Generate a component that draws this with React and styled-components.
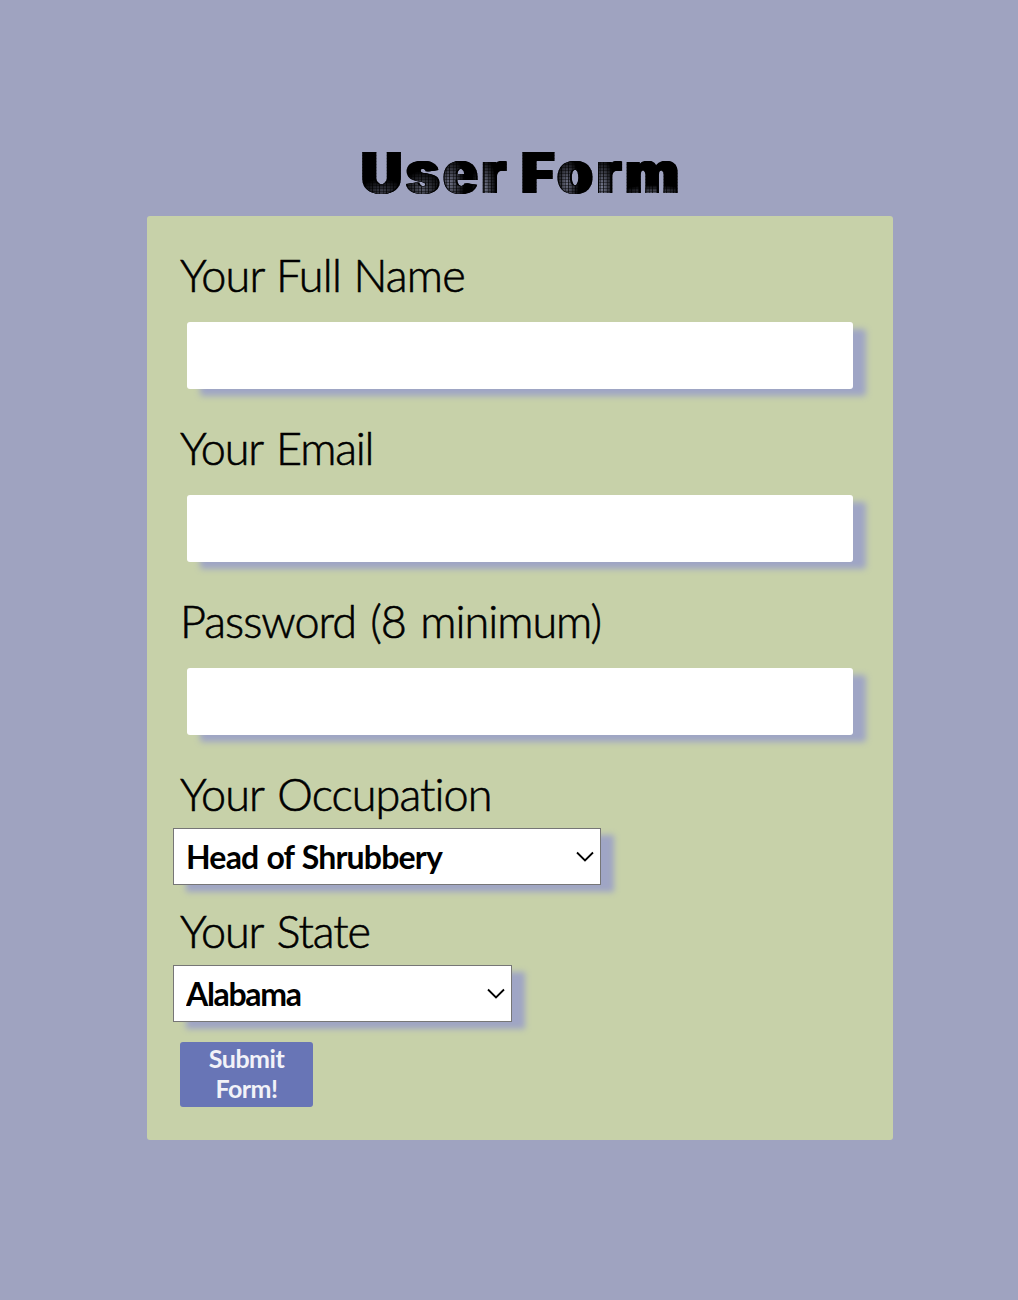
import React from "react";
import styled, { createGlobalStyle } from "styled-components";

const GlobalStyle = createGlobalStyle`
  * { box-sizing: border-box; }
  body { margin: 0; background: #9fa3c0; font-family: "Gill Sans", Lato, sans-serif; color: #000; }
`;

const Page = styled.main`
  min-height: 1300px;
  padding: 137px 125px 160px 147px;
`;

const Title = styled.h1`
  margin: 0 auto 9px;
  width: 325px;
  height: 70px;
  line-height: 71px;
  padding-left: 3px;
  white-space: nowrap;
  font-family: Inter, sans-serif;
  font-weight: 900;
  font-size: 57px;
  letter-spacing: 3.8px;
  word-spacing: -4px;
  color: transparent;
  /* worn ink: fine scratches fading in over the lower part of some letters */
  background:
    repeating-linear-gradient(90deg, #000a 0 1px, transparent 1px 4px, #0006 4px 5px, transparent 5px 7px),
    repeating-linear-gradient(0deg, #0006 0 1px, transparent 1px 3px),
    radial-gradient(ellipse 22px 12px at 24px 54px, #3c3e4a, transparent),
    radial-gradient(ellipse 20px 18px at 64px 52px, #565968, transparent),
    radial-gradient(ellipse 15px 26px at 92px 46px, #6d7084, transparent),
    radial-gradient(ellipse 12px 30px at 126px 50px, #777b90, transparent),
    radial-gradient(ellipse 12px 26px at 209px 46px, #6d7084, transparent),
    radial-gradient(ellipse 12px 30px at 244px 50px, #777b90, transparent),
    radial-gradient(ellipse 34px 8px at 296px 56px, #565968, transparent),
    #000;
  background-clip: text;
  -webkit-background-clip: text;
  filter: drop-shadow(2px 0 0 #000) drop-shadow(-1px 0 0 #000);
`;

const Form = styled.form`
  width: 746px;
  height: 924px;
  padding: 31px 33px 33px;
  display: flex;
  flex-direction: column;
  align-items: flex-start;
  background: #c7d1a9;
  border-radius: 3px;
`;

const Field = styled.div`
  display: flex;
  flex-direction: column;
  gap: ${(p) => (p.$select ? 8 : 21)}px;
  margin-bottom: ${(p) => p.$after}px;
`;

const Label = styled.label`
  height: 54px;
  line-height: 56px;
  font-size: 45px;
  font-weight: 300;
  white-space: nowrap;
  -webkit-text-stroke: 0.6px #000;
  letter-spacing: ${(p) => p.$track || 0}px;
  word-spacing: ${(p) => p.$space || 0}px;
`;

const Input = styled.input`
  width: 666px;
  height: 67px;
  margin-left: 7px;
  padding: 0 14px;
  border: 0;
  border-radius: 3px;
  background: #fff;
  box-shadow: 13px 7px 6px #9fa5c5;
  font: 32px Lato, sans-serif;
`;

const SelectBox = styled.div`
  display: grid;
  align-items: center;
  width: ${(p) => p.$width}px;
  height: 57px;
  margin-left: -7px;
  background: #fff;
  border: 1px solid #767676;
  box-shadow: 13px 7px 6px #9fa5c5;

  > * { grid-area: 1 / 1; }
  > svg { justify-self: end; margin-right: 6px; pointer-events: none; }
`;

const Select = styled.select`
  appearance: none;
  width: 100%;
  height: 55px;
  padding: 0 30px 0 12px;
  border: 0;
  background: transparent;
  color: #000;
  font: 700 32px Lato, sans-serif;
  letter-spacing: ${(p) => p.$track || 0}px;
  word-spacing: ${(p) => p.$space || 0}px;
`;

const Submit = styled.button`
  width: 133px;
  height: 65px;
  padding: 0 20px 4px;
  border: 0;
  border-radius: 3px;
  background: #6875b6;
  color: #f2f2f8;
  font: 700 25px/30px Lato, sans-serif;
  letter-spacing: -0.5px;
`;

const Chevron = () => (
  <svg width="18" height="12" viewBox="0 0 18 12" fill="none" stroke="#000" strokeWidth="1.8">
    <path d="M1 1.5 L9 9.5 L17 1.5" />
  </svg>
);

const textFields = [
  { id: "name", label: "Your Full Name", type: "text", track: -0.8, space: 1 },
  { id: "email", label: "Your Email", type: "email", track: -1.2, space: 3 },
  { id: "password", label: "Password (8 minimum)", type: "password", track: -1, space: 3 },
];

const selectFields = [
  { id: "job", label: "Your Occupation", value: "Head of Shrubbery", width: 428, after: 18, track: -0.95, space: 3, vTrack: -0.8, vSpace: 1 },
  { id: "state", label: "Your State", value: "Alabama", width: 339, after: 20, track: -1.1, space: 3, vTrack: -1.3 },
];

export default function App() {
  return (
    <Page>
      <GlobalStyle />
      <Title>User Form</Title>
      <Form onSubmit={(e) => e.preventDefault()}>
        {textFields.map((f) => (
          <Field key={f.id} $after={31}>
            <Label htmlFor={f.id} $track={f.track} $space={f.space}>{f.label}</Label>
            <Input id={f.id} type={f.type} />
          </Field>
        ))}
        {selectFields.map((f) => (
          <Field key={f.id} $select $after={f.after}>
            <Label htmlFor={f.id} $track={f.track} $space={f.space}>{f.label}</Label>
            <SelectBox $width={f.width}>
              <Select id={f.id} $track={f.vTrack} $space={f.vSpace}>
                <option>{f.value}</option>
              </Select>
              <Chevron />
            </SelectBox>
          </Field>
        ))}
        <Submit type="submit">Submit Form!</Submit>
      </Form>
    </Page>
  );
}
